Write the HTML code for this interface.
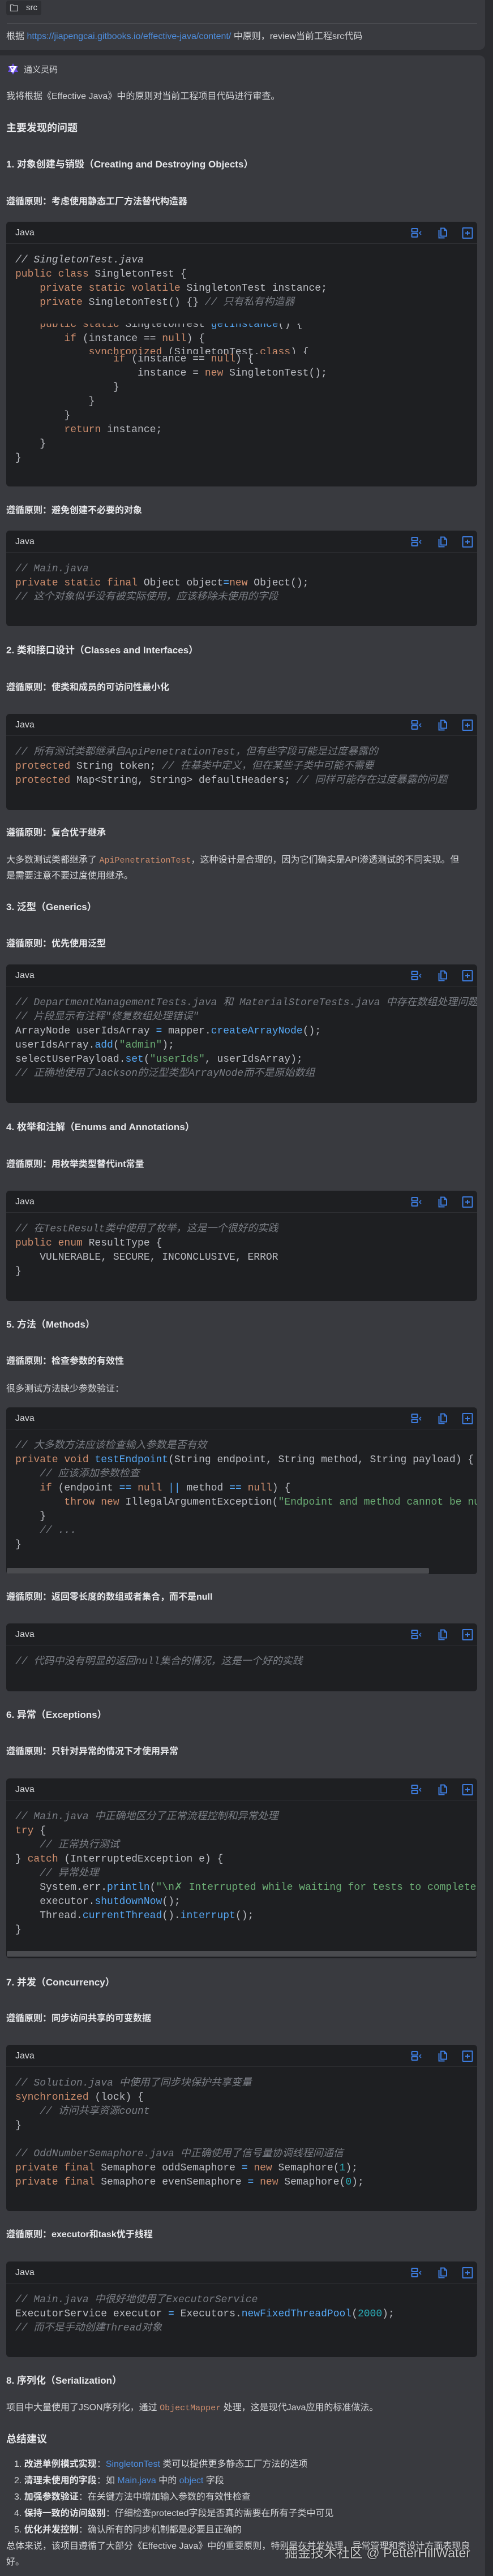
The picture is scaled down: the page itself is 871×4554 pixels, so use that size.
<!DOCTYPE html>
<html><head><meta charset="utf-8"><style>
*{margin:0;padding:0;box-sizing:border-box}
html,body{width:871px;height:4554px;background:#2b2c30;overflow:hidden}
body{position:relative;font-family:"Liberation Sans","Noto Sans CJK SC",sans-serif;color:#d4d5d8;font-size:16px}
.card1{position:absolute;left:0;top:-10px;width:857px;height:98px;background:#393a3f;border-radius:0 0 10px 0}
.card2{position:absolute;left:0;top:98px;width:857px;height:4480px;background:#393a3f;border-radius:0 10px 0 0}
.t{position:absolute;left:11px;line-height:28px;white-space:nowrap;color:#d4d5d8}
.b{font-weight:bold;color:#e6e7ea}
.h{font-weight:bold;font-size:17px;color:#e6e7ea}
.a{color:#4e8fe0}
.ic{font-family:"Liberation Mono",monospace;color:#cf8e6d;font-size:15px}
.cb{position:absolute;left:11px;width:832px;background:#1e1f22;border-radius:6px;overflow:hidden}
.hd{height:39px;border-bottom:1px solid #2d2e32;position:relative}
.hd .l{position:absolute;left:16px;top:0;line-height:39px;font-size:16px;color:#d8d9dc}
.hd svg{position:absolute;top:10px}
pre{font-family:"Liberation Mono","Noto Sans CJK SC",monospace;font-size:18px;line-height:25px;color:#bcbec4;padding:17px 0 0 16px;white-space:pre;overflow:hidden}
.k{color:#cf8e6d}.c{color:#7a7e85;font-style:italic}.f{color:#56a8f5}.s{color:#6aab73}.n{color:#2aacb8}
.ln{position:absolute;left:16px;font-family:"Liberation Mono","Noto Sans CJK SC",monospace;font-size:18px;line-height:25px;color:#bcbec4;white-space:pre}
.sb{position:absolute;left:1px;height:10px;background:#4a4b4f;border-radius:2px}
</style></head><body>
<div class="card1"></div>
<div class="card2"></div>
<div style="position:absolute;left:11px;top:1px;width:62px;height:26px;background:#2e2f33;border-radius:4px"></div>
<svg style="position:absolute;left:17px;top:6px" width="16" height="15" viewBox="0 0 16 15"><path d="M1.5 2.5h4.5l1.5 1.5h6.5v9.5h-12.5z" fill="none" stroke="#b9babd" stroke-width="1.3"/></svg>
<div class="t" style="left:46px;top:0;line-height:27px;font-size:15px;color:#d4d5d8">src</div>
<div style="position:absolute;left:12px;top:41px;width:831px;height:1px;background:#4a4b50"></div>
<div class="t" style="top:51px">根据 <span class="a">https://jiapengcai.gitbooks.io/effective-java/content/</span> 中原则，review当前工程src代码</div>

<svg style="position:absolute;left:11px;top:111px" width="24" height="24" viewBox="0 0 24 24"><path d="M12 1l3 5h6l-3 5 3 5h-6l-3 5-3-5H3l3-5-3-5h6z" fill="#6b4fe8"/><path d="M7 7h10l-5 9z" fill="none" stroke="#fff" stroke-width="2"/><path d="M9 16l6-9" stroke="#fff" stroke-width="2"/></svg>
<div class="t" style="left:42px;top:110px;font-size:15px">通义灵码</div>
<div class="t" style="top:157px">我将根据《Effective Java》中的原则对当前工程项目代码进行审查。</div>
<div class="t h" style="top:212px;font-size:18px">主要发现的问题</div>
<div class="t h" style="top:277px">1. 对象创建与销毁（Creating and Destroying Objects）</div>
<div class="t b" style="top:343px">遵循原则：考虑使用静态工厂方法替代构造器</div>

<div class="cb" style="top:392px;height:468px">
<div class="hd"><span class="l">Java</span>ICONS</div>
<div class="ln c" style="top:56px">// SingletonTest.java</div>
<div class="ln" style="top:81px"><span class="k">public class</span> SingletonTest {</div>
<div class="ln" style="top:106px">    <span class="k">private static volatile</span> SingletonTest instance;</div>
<div class="ln" style="top:131px">    <span class="k">private</span> SingletonTest() {} <span class="c">// 只有私有构造器</span></div>
<div style="position:absolute;left:0;top:180px;width:832px;height:10px;overflow:hidden"><div class="ln" style="top:-10px">    <span class="k">public static</span> SingletonTest <span class="f">getInstance</span>() {</div></div>
<div class="ln" style="top:195px">        <span class="k">if</span> (instance == <span class="k">null</span>) {</div>
<div style="position:absolute;left:0;top:222px;width:832px;height:12px;overflow:hidden"><div class="ln" style="top:-3px">            <span class="k">synchronized</span> (SingletonTest.<span class="k">class</span>) {</div></div>
<div class="ln" style="top:231px">                <span class="k">if</span> (instance == <span class="k">null</span>) {</div>
<div class="ln" style="top:256px">                    instance = <span class="k">new</span> SingletonTest();</div>
<div class="ln" style="top:281px">                }</div>
<div class="ln" style="top:306px">            }</div>
<div class="ln" style="top:331px">        }</div>
<div class="ln" style="top:356px">        <span class="k">return</span> instance;</div>
<div class="ln" style="top:381px">    }</div>
<div class="ln" style="top:406px">}</div>
</div>

<div class="t b" style="top:889px">遵循原则：避免创建不必要的对象</div>
<div class="cb" style="top:938px;height:169px"><div class="hd"><span class="l">Java</span>ICONS</div><pre><span class="c">// Main.java</span>
<span class="k">private static final</span> Object object<span class="f">=</span><span class="k">new</span> Object();
<span class="c">// 这个对象似乎没有被实际使用，应该移除未使用的字段</span></pre></div>

<div class="t h" style="top:1136px">2. 类和接口设计（Classes and Interfaces）</div>
<div class="t b" style="top:1202px">遵循原则：使类和成员的可访问性最小化</div>
<div class="cb" style="top:1262px;height:170px"><div class="hd"><span class="l">Java</span>ICONS</div><pre><span class="c">// 所有测试类都继承自ApiPenetrationTest，但有些字段可能是过度暴露的</span>
<span class="k">protected</span> String token; <span class="c">// 在基类中定义，但在某些子类中可能不需要</span>
<span class="k">protected</span> Map&lt;String, String&gt; defaultHeaders; <span class="c">// 同样可能存在过度暴露的问题</span></pre></div>
<div class="t b" style="top:1459px">遵循原则：复合优于继承</div>
<div class="t" style="top:1507px">大多数测试类都继承了 <span class="ic">ApiPenetrationTest</span>，这种设计是合理的，因为它们确实是API渗透测试的不同实现。但</div>
<div class="t" style="top:1535px">是需要注意不要过度使用继承。</div>

<div class="t h" style="top:1590px">3. 泛型（Generics）</div>
<div class="t b" style="top:1655px">遵循原则：优先使用泛型</div>
<div class="cb" style="top:1705px;height:245px"><div class="hd"><span class="l">Java</span>ICONS</div><pre><span class="c">// DepartmentManagementTests.java 和 MaterialStoreTests.java 中存在数组处理问题</span>
<span class="c">// 片段显示有注释"修复数组处理错误"</span>
ArrayNode userIdsArray <span class="f">=</span> mapper.<span class="f">createArrayNode</span>();
userIdsArray.<span class="f">add</span>(<span class="s">"admin"</span>);
selectUserPayload.<span class="f">set</span>(<span class="s">"userIds"</span>, userIdsArray);
<span class="c">// 正确地使用了Jackson的泛型类型ArrayNode而不是原始数组</span></pre></div>

<div class="t h" style="top:1979px">4. 枚举和注解（Enums and Annotations）</div>
<div class="t b" style="top:2045px">遵循原则：用枚举类型替代int常量</div>
<div class="cb" style="top:2105px;height:195px"><div class="hd"><span class="l">Java</span>ICONS</div><pre><span class="c">// 在TestResult类中使用了枚举，这是一个很好的实践</span>
<span class="k">public enum</span> ResultType {
    VULNERABLE, SECURE, INCONCLUSIVE, ERROR
}</pre></div>

<div class="t h" style="top:2328px">5. 方法（Methods）</div>
<div class="t b" style="top:2393px">遵循原则：检查参数的有效性</div>
<div class="t" style="top:2442px">很多测试方法缺少参数验证：</div>
<div class="cb" style="top:2488px;height:295px"><div class="hd"><span class="l">Java</span>ICONS</div><pre><span class="c">// 大多数方法应该检查输入参数是否有效</span>
<span class="k">private void</span> <span class="f">testEndpoint</span>(String endpoint, String method, String payload) {
    <span class="c">// 应该添加参数检查</span>
    <span class="k">if</span> (endpoint <span class="f">==</span> <span class="k">null</span> <span class="f">||</span> method <span class="f">==</span> <span class="k">null</span>) {
        <span class="k">throw new</span> IllegalArgumentException(<span class="s">"Endpoint and method cannot be null"</span>);
    }
    <span class="c">// ...</span>
}</pre><div class="sb" style="top:284px;width:746px"></div></div>
<div class="t b" style="top:2810px">遵循原则：返回零长度的数组或者集合，而不是null</div>
<div class="cb" style="top:2870px;height:120px"><div class="hd"><span class="l">Java</span>ICONS</div><pre><span class="c">// 代码中没有明显的返回null集合的情况，这是一个好的实践</span></pre></div>

<div class="t h" style="top:3018px">6. 异常（Exceptions）</div>
<div class="t b" style="top:3083px">遵循原则：只针对异常的情况下才使用异常</div>
<div class="cb" style="top:3144px;height:318px"><div class="hd"><span class="l">Java</span>ICONS</div><pre><span class="c">// Main.java 中正确地区分了正常流程控制和异常处理</span>
<span class="k">try</span> {
    <span class="c">// 正常执行测试</span>
} <span class="k">catch</span> (InterruptedException e) {
    <span class="c">// 异常处理</span>
    System.err.<span class="f">println</span>(<span class="s">"\n✗ Interrupted while waiting for tests to complete"</span>);
    executor.<span class="f">shutdownNow</span>();
    Thread.<span class="f">currentThread</span>().<span class="f">interrupt</span>();
}</pre><div class="sb" style="top:305px;width:830px"></div></div>

<div class="t h" style="top:3491px">7. 并发（Concurrency）</div>
<div class="t b" style="top:3555px">遵循原则：同步访问共享的可变数据</div>
<div class="cb" style="top:3615px;height:294px"><div class="hd"><span class="l">Java</span>ICONS</div><pre><span class="c">// Solution.java 中使用了同步块保护共享变量</span>
<span class="k">synchronized</span> (lock) {
    <span class="c">// 访问共享资源count</span>
}

<span class="c">// OddNumberSemaphore.java 中正确使用了信号量协调线程间通信</span>
<span class="k">private final</span> Semaphore oddSemaphore <span class="f">=</span> <span class="k">new</span> Semaphore(<span class="n">1</span>);
<span class="k">private final</span> Semaphore evenSemaphore <span class="f">=</span> <span class="k">new</span> Semaphore(<span class="n">0</span>);</pre></div>
<div class="t b" style="top:3937px">遵循原则：executor和task优于线程</div>
<div class="cb" style="top:3998px;height:169px"><div class="hd"><span class="l">Java</span>ICONS</div><pre><span class="c">// Main.java 中很好地使用了ExecutorService</span>
ExecutorService executor <span class="f">=</span> Executors.<span class="f">newFixedThreadPool</span>(<span class="n">2000</span>);
<span class="c">// 而不是手动创建Thread对象</span></pre></div>

<div class="t h" style="top:4195px">8. 序列化（Serialization）</div>
<div class="t" style="top:4243px">项目中大量使用了JSON序列化，通过 <span class="ic">ObjectMapper</span> 处理，这是现代Java应用的标准做法。</div>
<div class="t h" style="top:4298px;font-size:18px">总结建议</div>
<div class="t" style="left:25px;top:4343px">1. <b class="b">改进单例模式实现</b>：<span class="a">SingletonTest</span> 类可以提供更多静态工厂方法的选项</div>
<div class="t" style="left:25px;top:4372px">2. <b class="b">清理未使用的字段</b>：如 <span class="a">Main.java</span> 中的 <span class="a">object</span> 字段</div>
<div class="t" style="left:25px;top:4401px">3. <b class="b">加强参数验证</b>：在关键方法中增加输入参数的有效性检查</div>
<div class="t" style="left:25px;top:4430px">4. <b class="b">保持一致的访问级别</b>：仔细检查protected字段是否真的需要在所有子类中可见</div>
<div class="t" style="left:25px;top:4459px">5. <b class="b">优化并发控制</b>：确认所有的同步机制都是必要且正确的</div>
<div class="t" style="top:4488px">总体来说，该项目遵循了大部分《Effective Java》中的重要原则，特别是在并发处理、异常管理和类设计方面表现良</div>
<div class="t" style="top:4516px">好。</div>
<div style="position:absolute;left:503px;top:4498px;font-size:23px;line-height:30px;color:rgba(235,235,235,0.85);text-shadow:0 0 2px #000;white-space:nowrap">掘金技术社区 @ PetterHillWater</div>

<script>
var ic='<svg style="left:715px" width="20" height="20" viewBox="0 0 20 20"><rect x="1.5" y="2" width="10" height="6" rx="1" fill="none" stroke="#3d7bdc" stroke-width="2"/><rect x="1.5" y="11" width="10" height="6" rx="1" fill="none" stroke="#3d7bdc" stroke-width="2"/><path d="M18 7l-3 3 3 3" fill="none" stroke="#3d7bdc" stroke-width="1.6"/></svg>'+
'<svg style="left:761px" width="20" height="20" viewBox="0 0 20 20"><path d="M7 1.5h6l4 4v10H7z" fill="none" stroke="#3d7bdc" stroke-width="2"/><path d="M13 1.5v4h4" fill="none" stroke="#3d7bdc" stroke-width="1.6"/><path d="M3.5 5v13.5h10" fill="none" stroke="#3d7bdc" stroke-width="2"/></svg>'+
'<svg style="left:805px" width="20" height="20" viewBox="0 0 20 20"><rect x="1.5" y="1" width="17" height="18" rx="1" fill="none" stroke="#3d7bdc" stroke-width="2"/><path d="M10 6v8M6 10h8" stroke="#3d7bdc" stroke-width="2"/></svg>';
document.querySelectorAll('.hd').forEach(function(h){h.innerHTML=h.innerHTML.replace('ICONS',ic);});
</script>
</body></html>
